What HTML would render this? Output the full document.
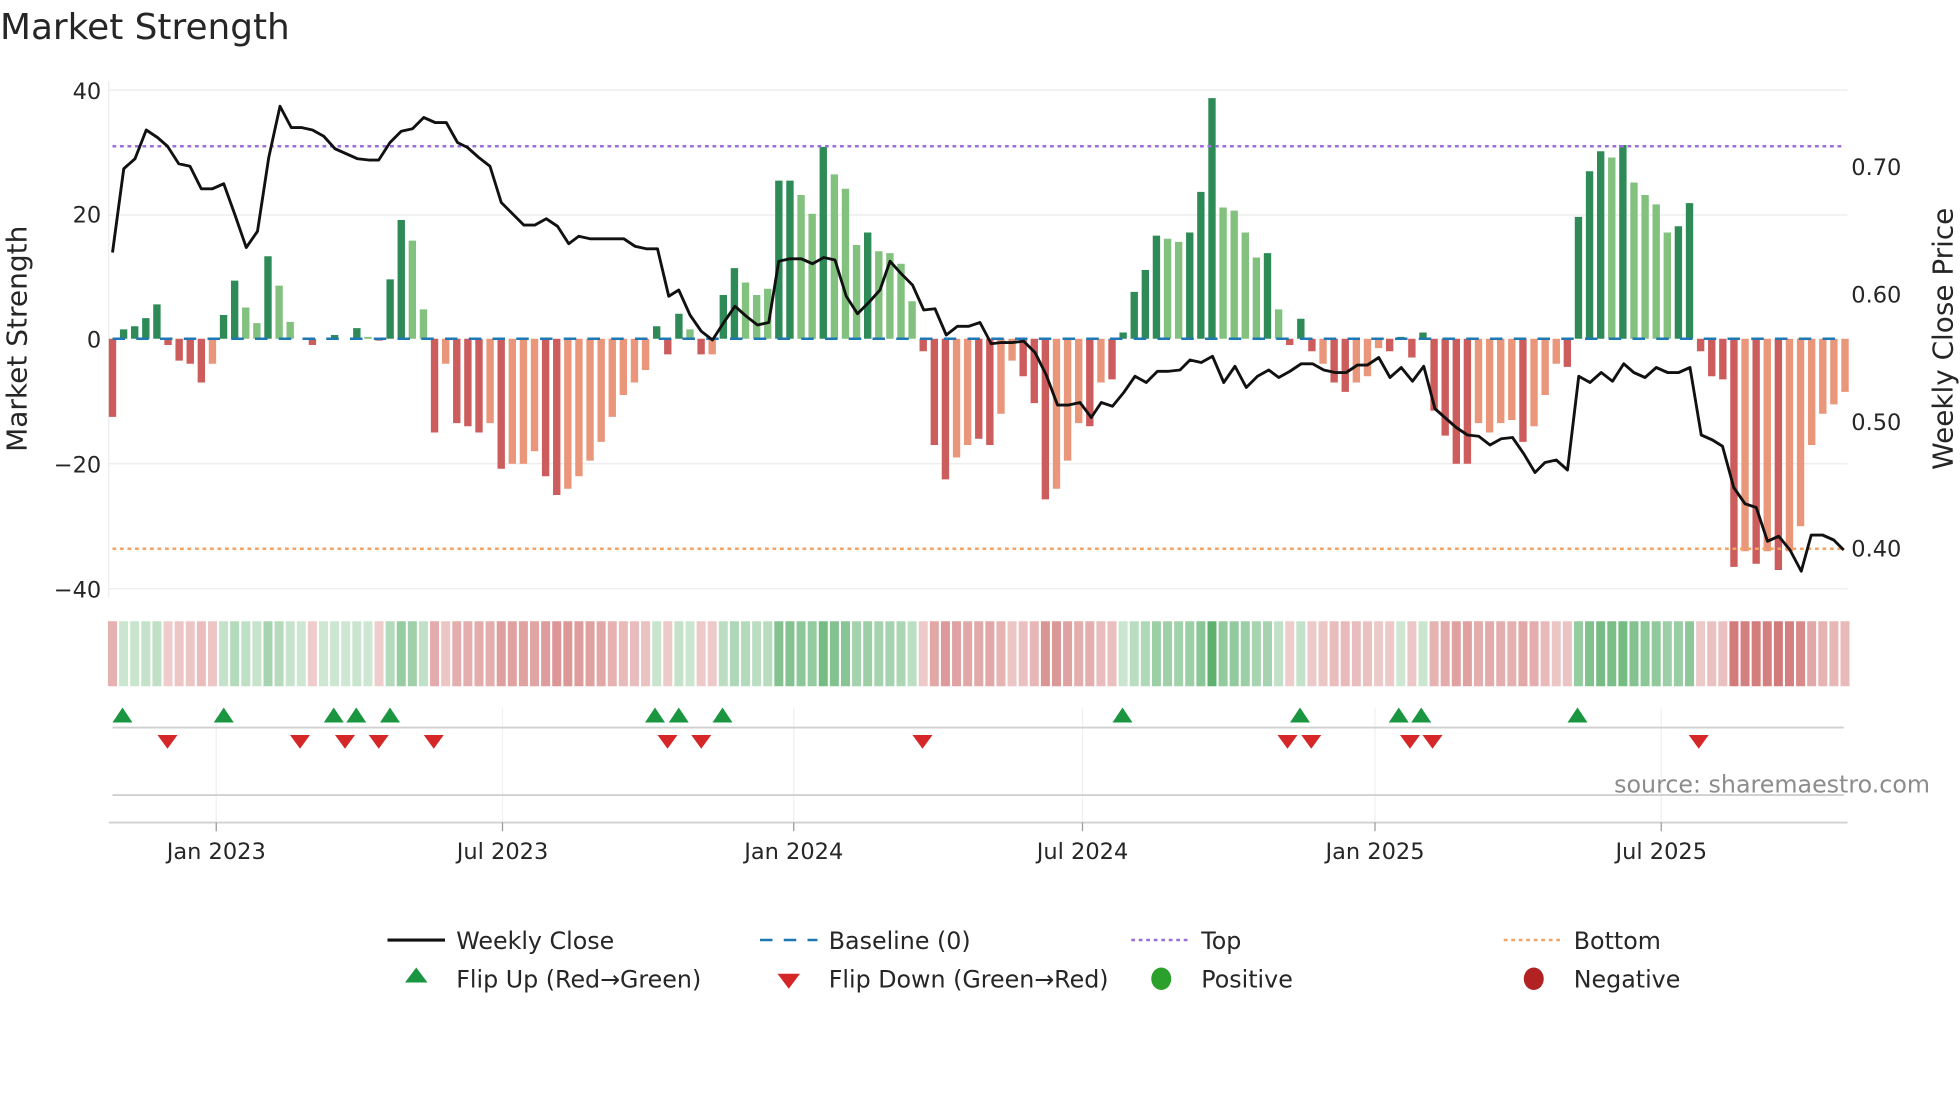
<!DOCTYPE html>
<html><head><meta charset="utf-8"><style>
html,body{margin:0;padding:0;background:#fff;width:1960px;height:1102px;overflow:hidden}
svg{display:block}
text{font-family:"DejaVu Sans","Liberation Sans",sans-serif;fill:#262626}
</style></head><body>
<svg id="s" width="1960" height="1102" viewBox="0 0 1568 881.6" xmlns="http://www.w3.org/2000/svg">
<text x="0" y="31" font-size="28.7">Market Strength</text>
<g stroke="#ebebeb" stroke-width="1">
<line x1="87" y1="72" x2="1478" y2="72"/><line x1="87" y1="172" x2="1478" y2="172"/>
<line x1="87" y1="371" x2="1478" y2="371"/><line x1="87" y1="471" x2="1478" y2="471"/>
</g>
<line x1="87" y1="65" x2="87" y2="478" stroke="#ebebeb"/>
<g font-size="18" text-anchor="end">
<text x="81" y="79">40</text><text x="81" y="178">20</text><text x="81" y="278">0</text>
<text x="81" y="378">−20</text><text x="81" y="478">−40</text></g>
<g font-size="18">
<text x="1481" y="140">0.70</text><text x="1481" y="242">0.60</text><text x="1481" y="344">0.50</text><text x="1481" y="445">0.40</text></g>
<text transform="translate(21,271) rotate(-90)" font-size="22.4" text-anchor="middle">Market Strength</text>
<text transform="translate(1562,271) rotate(-90)" font-size="22.3" text-anchor="middle">Weekly Close Price</text>
<g id="bars"></g>
<line x1="90" y1="271" x2="1476" y2="271" stroke="#1f77b4" stroke-width="2" stroke-dasharray="10,9"/>
<line x1="90" y1="117" x2="1476" y2="117" stroke="#9b6fd8" stroke-width="2" stroke-dasharray="3,3"/>
<line x1="90" y1="439" x2="1476" y2="439" stroke="#f2a366" stroke-width="2" stroke-dasharray="3,3"/>
<polyline id="price" fill="none" stroke="#111" stroke-width="2.3" stroke-linejoin="round"/>
<g id="heat"></g>
<g stroke="#eef0f2" stroke-width="1">
<line x1="173" y1="566" x2="173" y2="658"/><line x1="402" y1="566" x2="402" y2="658"/>
<line x1="635" y1="566" x2="635" y2="658"/><line x1="866" y1="566" x2="866" y2="658"/>
<line x1="1100" y1="566" x2="1100" y2="658"/><line x1="1329" y1="566" x2="1329" y2="658"/></g>
<line x1="90" y1="582" x2="1475" y2="582" stroke="#d0d0d0" stroke-width="1.5"/>
<line x1="90" y1="636" x2="1475" y2="636" stroke="#d0d0d0" stroke-width="1.5"/>
<line x1="87" y1="658" x2="1478" y2="658" stroke="#d0d0d0" stroke-width="1.5"/>
<g stroke="#999" stroke-width="1">
<line x1="173" y1="658" x2="173" y2="665"/><line x1="402" y1="658" x2="402" y2="665"/>
<line x1="635" y1="658" x2="635" y2="665"/><line x1="866" y1="658" x2="866" y2="665"/>
<line x1="1100" y1="658" x2="1100" y2="665"/><line x1="1329" y1="658" x2="1329" y2="665"/></g>
<g id="marks"></g>
<text x="1544" y="634" font-size="19" text-anchor="end" style="fill:#8c8c8c">source: sharemaestro.com</text>
<g font-size="18" text-anchor="middle">
<text x="173" y="687">Jan 2023</text><text x="402" y="687">Jul 2023</text><text x="635" y="687">Jan 2024</text>
<text x="866" y="687">Jul 2024</text><text x="1100" y="687">Jan 2025</text><text x="1329" y="687">Jul 2025</text></g>
<g font-size="19">
<line x1="310" y1="752" x2="356" y2="752" stroke="#111" stroke-width="2.5"/><text x="365" y="759">Weekly Close</text>
<line x1="608" y1="752" x2="654" y2="752" stroke="#1f77b4" stroke-width="2" stroke-dasharray="10,9"/><text x="663" y="759">Baseline (0)</text>
<line x1="905" y1="752" x2="951" y2="752" stroke="#9b6fd8" stroke-width="2" stroke-dasharray="3,3"/><text x="961" y="759">Top</text>
<line x1="1203" y1="752" x2="1249" y2="752" stroke="#f2a366" stroke-width="2" stroke-dasharray="3,3"/><text x="1259" y="759">Bottom</text>
<polygon points="333,774 342,786 324,786" fill="#1a9641"/><text x="365" y="790">Flip Up (Red→Green)</text>
<polygon points="622,779 640,779 631,791" fill="#d62728"/><text x="663" y="790">Flip Down (Green→Red)</text>
<ellipse cx="929" cy="783" rx="8" ry="9" fill="#2ca02c"/><text x="961" y="790">Positive</text>
<ellipse cx="1227" cy="783" rx="8" ry="9" fill="#b22222"/><text x="1259" y="790">Negative</text>
</g>
</svg>
<script>
var NS="http://www.w3.org/2000/svg";
function el(t,a,p){var e=document.createElementNS(NS,t);for(var k in a)e.setAttribute(k,a[k]);p.appendChild(e);return e;}
var B=[[-12.5,'r'],[1.5,'d'],[2,'d'],[3.3,'d'],[5.5,'d'],[-1,'r'],[-3.5,'r'],[-4,'r'],[-7,'r'],[-4,'o'],[3.8,'d'],[9.3,'d'],[5,'l'],[2.5,'l'],[13.2,'d'],[8.5,'l'],[2.7,'l'],[0,'d'],[-1,'r'],[0,'d'],[0.6,'d'],[0,'d'],[1.7,'d'],[0.3,'l'],[-0.3,'r'],[9.5,'d'],[19,'d'],[15.7,'l'],[4.7,'l'],[-15,'r'],[-4,'o'],[-13.5,'r'],[-14,'r'],[-15,'r'],[-13.5,'o'],[-20.8,'r'],[-20,'o'],[-20,'o'],[-18,'o'],[-22,'r'],[-25,'r'],[-24,'o'],[-22,'o'],[-19.5,'o'],[-16.5,'o'],[-12.5,'o'],[-9,'o'],[-7,'o'],[-5,'o'],[2,'d'],[-2.5,'r'],[4,'d'],[1.5,'l'],[-2.5,'r'],[-2.5,'o'],[7,'d'],[11.3,'d'],[9,'l'],[7,'l'],[8,'l'],[25.3,'d'],[25.3,'d'],[23,'l'],[20,'l'],[30.7,'d'],[26.3,'l'],[24,'l'],[15,'l'],[17,'d'],[14,'l'],[13.7,'l'],[12,'l'],[6,'l'],[-2,'r'],[-17,'r'],[-22.5,'r'],[-19,'o'],[-17,'o'],[-16,'r'],[-17,'r'],[-12,'o'],[-3.5,'o'],[-6,'r'],[-10.3,'r'],[-25.7,'r'],[-24,'o'],[-19.5,'o'],[-13.5,'o'],[-14,'r'],[-7,'o'],[-6.5,'r'],[1,'d'],[7.5,'d'],[11,'d'],[16.5,'d'],[16,'l'],[15.5,'l'],[17,'d'],[23.5,'d'],[38.5,'d'],[21,'l'],[20.5,'l'],[17,'l'],[13,'l'],[13.7,'d'],[4.7,'l'],[-1,'r'],[3.2,'d'],[-2,'r'],[-4,'o'],[-7,'r'],[-8.5,'r'],[-7,'o'],[-6,'o'],[-1.5,'o'],[-2,'r'],[0.3,'d'],[-3,'r'],[1,'d'],[-11.5,'r'],[-15.5,'r'],[-20,'r'],[-20,'r'],[-13.5,'o'],[-15,'o'],[-13.5,'o'],[-13,'o'],[-16.5,'r'],[-14,'o'],[-9,'o'],[-4,'o'],[-4.5,'r'],[19.5,'d'],[26.8,'d'],[30,'d'],[29,'l'],[31,'d'],[25,'l'],[23,'l'],[21.5,'l'],[17,'l'],[18,'d'],[21.7,'d'],[-2,'r'],[-6,'r'],[-6.5,'r'],[-36.5,'r'],[-34,'o'],[-36,'r'],[-34,'o'],[-37,'r'],[-34,'o'],[-30,'o'],[-17,'o'],[-12,'o'],[-10.5,'o'],[-8.5,'o']];
var col={d:'#2e8b57',l:'#82c17e',r:'#cd5c5c',o:'#e9967a'};
var bars=document.getElementById('bars'),heat=document.getElementById('heat');
var P=(1476-90)/(B.length-1);
B.forEach(function(b,i){
 var cx=90+P*i,v=b[0],h=Math.abs(v)*5;
 if(h>0.3) el('rect',{x:cx-2.95,y:v>=0?271-h:271,width:5.9,height:h,fill:col[b[1]]},bars);
 var f;
 if(v>=0){var a=0.25+0.6*Math.min(v,40)/40;f='rgba(60,160,80,'+a.toFixed(2)+')';}
 else{var a=0.3+0.55*Math.min(-v,40)/40;f='rgba(200,90,90,'+a.toFixed(2)+')';}
 el('rect',{x:cx-3.6,y:497,width:7.2,height:52,fill:f},heat);
});
var pr=[[90,202],[99,135],[108,127],[117,104],[126,110],[134,117],[143,131],[152,133],[161,151],[170,151],[179,147],[188,172],[197,198],[206,185],[215,126],[224,85],[233,102],[241,102],[250,104],[259,109],[268,119],[277,123],[286,127],[295,128],[303,128],[312,114],[321,105],[330,103],[339,94],[348,98],[357,98],[366,114],[374,118],[383,126],[392,133],[401,162],[410,171],[419,180],[428,180],[437,175],[446,181],[455,195],[463,189],[472,191],[481,191],[490,191],[499,191],[508,197],[517,199],[526,199],[535,237],[543,232],[552,252],[561,265],[570,272],[579,258],[588,245],[597,253],[606,260],[615,258],[623,209],[632,207],[641,207],[650,211],[659,206],[668,208],[677,237],[686,251],[695,242],[704,232],[712,209],[721,219],[730,228],[739,248],[748,247],[757,268],[766,261],[775,261],[784,258],[793,275],[801,274],[810,274],[819,273],[828,282],[837,300],[846,324],[855,324],[864,322],[873,334],[881,322],[890,325],[899,314],[908,301],[917,306],[926,297],[935,297],[944,296],[952,288],[961,290],[970,285],[979,306],[988,293],[997,310],[1006,301],[1015,296],[1023,302],[1032,297],[1041,291],[1050,291],[1059,296],[1068,298],[1077,298],[1086,292],[1094,292],[1103,286],[1112,302],[1121,294],[1130,305],[1139,293],[1148,327],[1157,335],[1165,342],[1174,348],[1183,349],[1192,356],[1201,351],[1210,350],[1219,363],[1228,378],[1236,370],[1245,368],[1254,376],[1263,301],[1272,306],[1281,298],[1290,305],[1299,291],[1307,298],[1316,302],[1325,294],[1334,298],[1343,298],[1352,294],[1361,348],[1370,352],[1378,357],[1387,390],[1396,403],[1405,406],[1414,433],[1423,429],[1432,440],[1441,457],[1449,428],[1458,428],[1467,432],[1475,440]];
document.getElementById('price').setAttribute('points',pr.map(function(p){return p.join(',')}).join(' '));
var m=document.getElementById('marks');
[98,179,267,285,312,524,543,578,898,1040,1119,1137,1262].forEach(function(x){el('polygon',{points:(x)+',566 '+(x+8)+',578 '+(x-8)+',578',fill:'#1a9641'},m);});
[134,240,276,303,347,534,561,738,1030,1049,1128,1146,1359].forEach(function(x){el('polygon',{points:(x-8)+',588 '+(x+8)+',588 '+x+',599',fill:'#d62728'},m);});
</script>
</body></html>
